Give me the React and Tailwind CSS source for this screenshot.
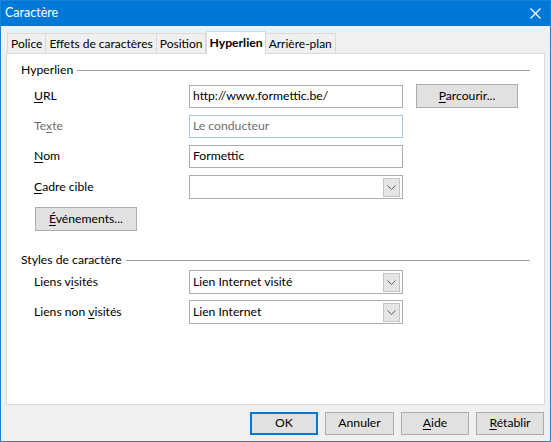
import React from "react";

function U({ children }) {
  return <span className="underline underline-offset-[2px]">{children}</span>;
}

function TextBox({ value, focused }) {
  return (
    <div
      className={
        "w-[214px] h-[23px] flex items-center px-[3px] bg-white border " +
        (focused ? "border-[#a9c6e6] text-[#6d6d6d]" : "border-[#adadad] text-black")
      }
    >
      {value}
    </div>
  );
}

function Select({ value }) {
  return (
    <div className="w-[214px] h-[24px] flex items-center justify-between pl-[3px] pr-[2px] bg-white border border-[#adadad]">
      <span>{value}</span>
      <div className="w-[17px] h-[19px] bg-[#e5e5e5] border border-[#c4c4c4] flex items-center justify-center">
        <svg width="9" height="5" viewBox="0 0 9 5">
          <path d="M0.5 0.5 L4.5 4.5 L8.5 0.5" fill="none" stroke="#606060" strokeWidth="1" />
        </svg>
      </div>
    </div>
  );
}

function Btn({ children, w, primary }) {
  return (
    <div
      className={
        "h-[23px] flex items-center justify-center bg-[#e1e1e1] " +
        (primary ? "border-2 border-[#0078d7]" : "border border-[#adadad]")
      }
      style={{ width: w }}
    >
      {children}
    </div>
  );
}

function Heading({ children }) {
  return (
    <div className="flex items-center h-[16px]">
      <span>{children}</span>
      <div className="flex-1 h-px bg-[#a0a0a0] ml-[4px]" />
    </div>
  );
}

export default function App() {
  const tabs = ["Police", "Effets de caractères", "Position", "Hyperlien", "Arrière-plan"];
  return (
    <div
      className="w-[551px] h-[442px] border border-[#1883d7] bg-[#f0f0f0] text-[12.2px] text-black flex flex-col"
      style={{ fontFamily: "Lato, 'Noto Sans', sans-serif" }}
    >
      {/* title bar */}
      <div className="h-[25px] bg-[#0078d7] flex items-center justify-between pl-[4px] pr-[9px] text-white">
        <span className="text-[12.5px]">Caractère</span>
        <svg width="11" height="11" viewBox="0 0 11 11">
          <path d="M0.5 0.5 L10.5 10.5 M10.5 0.5 L0.5 10.5" stroke="white" strokeWidth="1.2" />
        </svg>
      </div>

      {/* tabs */}
      <div className="h-[27px] flex items-end pl-[6px]">
        {tabs.map((t) =>
          t === "Hyperlien" ? (
            <div
              key={t}
              className="h-[23px] -mb-px bg-white border border-b-0 border-[#d9d9d9] px-[2px] flex items-center font-bold relative z-10"
            >
              {t}
            </div>
          ) : (
            <div
              key={t}
              className="h-[20px] bg-[#f0f0f0] border border-b-0 border-[#d9d9d9] -ml-px first:ml-0 px-[3px] flex items-center text-[12px]"
            >
              {t}
            </div>
          )
        )}
      </div>

      {/* panel */}
      <div className="mx-[5px] h-[352px] bg-white border border-[#d9d9d9] px-[14px] pt-[8px]">
        <Heading>Hyperlien</Heading>

        <div className="pl-[13px] mt-[6px] flex flex-col gap-[7px]">
          <div className="flex items-center">
            <span className="w-[155px]"><U>U</U>RL</span>
            <TextBox value="http://www.formettic.be/" />
            <div className="ml-[13px]">
              <div className="w-[102px] h-[24px] flex items-center justify-center bg-[#e1e1e1] border border-[#adadad]">
                <span><U>P</U>arcourir...</span>
              </div>
            </div>
          </div>
          <div className="flex items-center">
            <span className="w-[155px] text-[#6d6d6d]">Te<U>x</U>te</span>
            <TextBox value="Le conducteur" focused />
          </div>
          <div className="flex items-center">
            <span className="w-[155px]"><U>N</U>om</span>
            <TextBox value="Formettic" />
          </div>
          <div className="flex items-center">
            <span className="w-[155px]"><U>C</U>adre cible</span>
            <Select value="" />
          </div>
          <div className="pt-[1px]">
            <div className="ml-px w-[102px] h-[24px] flex items-center justify-center bg-[#e1e1e1] border border-[#adadad]">
              <span><U>É</U>vénements...</span>
            </div>
          </div>
        </div>

        <div className="mt-[21px]">
          <Heading>Styles de caractère</Heading>
        </div>

        <div className="pl-[13px] mt-[2px] flex flex-col gap-[6px]">
          <div className="flex items-center">
            <span className="w-[155px]">Liens v<U>i</U>sités</span>
            <Select value="Lien Internet visité" />
          </div>
          <div className="flex items-center">
            <span className="w-[155px]">Liens non <U>v</U>isités</span>
            <Select value="Lien Internet" />
          </div>
        </div>
      </div>

      {/* buttons */}
      <div className="flex justify-end gap-[7px] pr-[6px] mt-[7px]">
        <Btn w="68px" primary>OK</Btn>
        <Btn w="69px">Annuler</Btn>
        <Btn w="68px"><span><U>A</U>ide</span></Btn>
        <Btn w="68px"><span><U>R</U>établir</span></Btn>
      </div>
    </div>
  );
}
